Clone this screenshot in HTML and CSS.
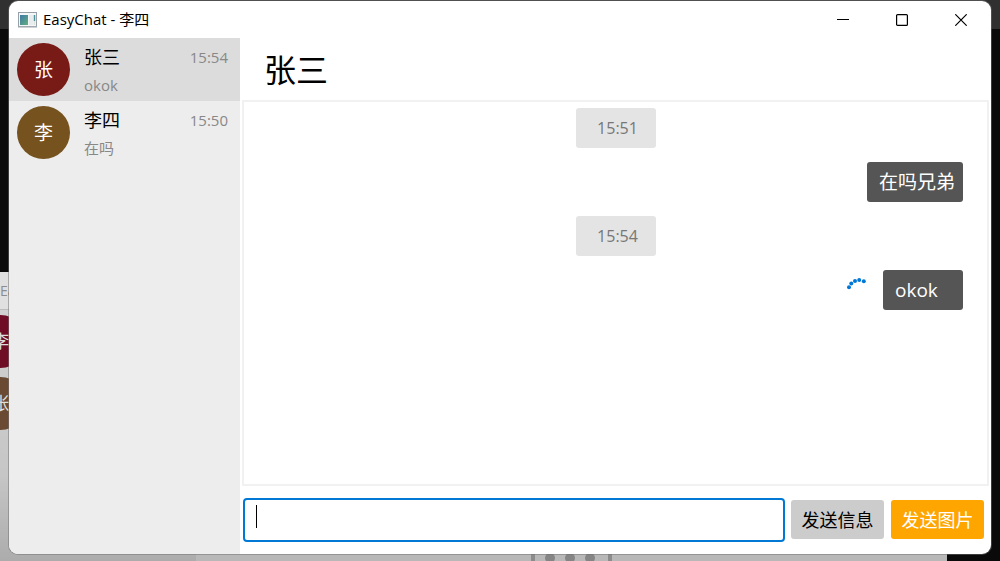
FILE: index.html
```html
<!DOCTYPE html>
<html lang="zh-CN">
<head>
<meta charset="utf-8">
<meta name="viewport" content="width=device-width, initial-scale=1">
<title>EasyChat - 李四</title>
<link rel="stylesheet" href="styles.css">
</head>
<body>
<div class="desktop" aria-hidden="true">
  <div class="desktop-top"></div>
  <div class="back-window">
    <div class="back-title">EasyChat</div>
    <div class="back-avatar back-avatar-red">李</div>
    <div class="back-avatar back-avatar-brown">张</div>
  </div>
  <div class="back-panel"></div>
  <svg class="back-dots" width="81" height="8" viewBox="0 0 81 8">
    <path d="M0 0H4V8H0ZM77 0H81V8H77Z" fill="#8c8c8c"/>
    <g fill="#858585"><circle cx="19" cy="5" r="5"/><circle cx="39" cy="5" r="5"/><circle cx="59" cy="5" r="5"/></g>
  </svg>
</div>
<div class="window">
  <header class="titlebar">
    <svg class="app-icon" width="19" height="16" viewBox="0 0 19 16">
      <defs>
        <linearGradient id="screen" x1="0" y1="0" x2="1" y2="1"><stop offset="0" stop-color="#3f78a8"/><stop offset="1" stop-color="#62b07c"/></linearGradient>
      </defs>
      <rect x=".5" y=".5" width="18" height="14" fill="#f4f6f7" stroke="#98a1a8"/>
      <path d="M0 15.200H19" stroke="#b9bec2"/>
      <rect x="2" y="3" width="8" height="10" fill="url(#screen)"/>
      <rect x="11" y="3" width="4" height="10" fill="#e9ecee"/>
      <path d="M16.500 3V9" stroke="#4d9296" stroke-width="1.500"/>
      <path d="M16.500 9V13" stroke="#d9e4de" stroke-width="1.500"/>
    </svg>
    <span class="app-name">EasyChat - 李四</span>
    <div class="window-controls">
      <button class="window-button" type="button" aria-label="最小化"><svg width="12" height="12" viewBox="0 0 12 12"><path d="M0 5.500H12"/></svg></button>
      <button class="window-button" type="button" aria-label="最大化"><svg width="12" height="12" viewBox="0 0 12 12"><rect x=".6" y=".6" width="10.800" height="10.800" rx="1"/></svg></button>
      <button class="window-button" type="button" aria-label="关闭"><svg width="12" height="12" viewBox="0 0 12 12"><path d="M.3.3 11.700 11.700M11.700.3.3 11.700"/></svg></button>
    </div>
  </header>
  <div class="body">
    <nav class="contacts">
      <button class="contact contact-active" type="button">
        <span class="avatar avatar-red">张</span>
        <span class="contact-text"><span class="contact-name">张三</span><span class="contact-last">okok</span></span>
        <time class="contact-time">15:54</time>
      </button>
      <button class="contact" type="button">
        <span class="avatar avatar-brown">李</span>
        <span class="contact-text"><span class="contact-name">李四</span><span class="contact-last">在吗</span></span>
        <time class="contact-time">15:50</time>
      </button>
    </nav>
    <main class="chat">
      <h1 class="chat-title">张三</h1>
      <section class="messages">
        <time class="stamp">15:51</time>
        <div class="message"><p class="bubble">在吗兄弟</p></div>
        <time class="stamp">15:54</time>
        <div class="message">
          <svg class="spinner" width="20" height="20" viewBox="0 0 20 20" role="img" aria-label="发送中">
            <g fill="#0078d7"><circle cx="2" cy="11.200" r="2"/><circle cx="4.300" cy="7.500" r="2"/><circle cx="8" cy="4.900" r="2"/><circle cx="12.200" cy="4" r="2"/><circle cx="16.800" cy="5.200" r="2"/></g>
          </svg>
          <p class="bubble">okok</p>
        </div>
      </section>
      <form class="composer">
        <div class="field">
          <input class="field-input" type="text" aria-label="信息">
          <span class="caret"></span>
        </div>
        <div class="actions">
          <button class="send send-text" type="button">发送信息</button>
          <button class="send send-image" type="button">发送图片</button>
        </div>
      </form>
    </main>
  </div>
</div>
</body>
</html>
```
FILE: styles.css
```css
* {
  box-sizing: border-box;
}

body {
  margin: 0;
  height: 100vh;
  padding: 1px 9px 7px;
  overflow: hidden;
  background: #0a0a0a;
  color: #000;
  font-family: "Open Sans", "Noto Sans CJK SC", sans-serif;
}

button,
input {
  font: inherit;
  border: 0;
  margin: 0;
}

/* Desktop behind the window */
.desktop {
  position: absolute;
  inset: 0;
  overflow: hidden;
}

.desktop-top {
  height: 29px;
  background: #303030;
}

.back-window {
  position: absolute;
  top: 272px;
  left: 0;
  bottom: 0;
  width: 196px;
  background: linear-gradient(#d4d4d4, #c6c6c6 70%, #acacac);
}

.back-title {
  height: 38px;
  border-bottom: 1px solid #bcbcbc;
  background: #e0e0e0;
  color: #8c8c8c;
  font-size: 14px;
  line-height: 37px;
}

.back-avatar {
  width: 53px;
  height: 53px;
  margin: 5px 0 9px -26px;
  border-radius: 50%;
  color: #ddd;
  font-size: 18px;
  line-height: 53px;
  text-align: center;
}

.back-avatar-red {
  background: #6e0d25;
}

.back-avatar-brown {
  background: #6b4a34;
}

.back-panel {
  position: absolute;
  left: 196px;
  right: 53px;
  bottom: 0;
  height: 8px;
  background: #b8b8b8;
}

.back-dots {
  position: absolute;
  left: 531px;
  bottom: 0;
}

/* Window */
.window {
  position: relative;
  display: flex;
  flex-direction: column;
  height: 100%;
  overflow: hidden;
  border-radius: 9px;
  background: #fff;
  box-shadow: 0 0 0 1px #70707080;
}

.titlebar {
  display: flex;
  align-items: center;
  height: 37px;
  padding: 0 1px 0 9px;
}

.app-name {
  margin-left: 6px;
  padding-bottom: 1px;
  font-size: 15px;
  line-height: 20px;
}

.window-controls {
  display: flex;
  height: 36px;
  margin-left: auto;
}

.window-button {
  display: flex;
  align-items: center;
  justify-content: center;
  width: 59px;
  padding: 0;
  background: transparent;
}

.window-button svg {
  fill: none;
  stroke: #000;
  stroke-width: 1.200;
}

.body {
  display: flex;
  flex: 1;
  min-height: 0;
}

/* Contacts */
.contacts {
  width: 231px;
  background: #ededed;
}

.contact {
  display: flex;
  align-items: flex-start;
  width: 100%;
  height: 63px;
  padding: 5px 12px 5px 8px;
  background: transparent;
  text-align: left;
}

.contact-active {
  background: #dcdcdc;
}

.avatar {
  width: 53px;
  height: 53px;
  border-radius: 50%;
  color: #fff;
  font-size: 19px;
  line-height: 55px;
  text-align: center;
}

.avatar-red {
  background: #781a16;
}

.avatar-brown {
  background: #76521f;
}

.contact-text {
  display: flex;
  flex: 1;
  flex-direction: column;
  gap: 4px;
  margin-left: 14px;
}

.contact-name {
  font-size: 18px;
  line-height: 28px;
}

.contact-last,
.contact-time {
  color: #888;
  font-size: 15px;
}

.contact-last {
  line-height: 20px;
}

.contact-time {
  line-height: 28px;
}

/* Conversation */
.chat {
  display: flex;
  flex: 1;
  flex-direction: column;
  min-width: 0;
}

.chat-title {
  margin: 0;
  height: 62px;
  padding-left: 24px;
  font-size: 32px;
  font-weight: 400;
  line-height: 64px;
}

.messages {
  display: flex;
  flex: 1;
  flex-direction: column;
  gap: 14px;
  min-height: 0;
  margin: 0 2px;
  padding: 6px 24px;
  border: 2px solid #f1f1f1;
}

.stamp {
  align-self: center;
  width: 80px;
  padding-left: 4px;
  border-radius: 3px;
  background: #e4e4e4;
  color: #777;
  font-size: 16px;
  line-height: 40px;
  text-align: center;
}

.message {
  display: flex;
  align-items: center;
  justify-content: flex-end;
  gap: 16px;
}

.spinner {
  margin-bottom: 8px;
}

.bubble {
  min-width: 80px;
  margin: 0;
  padding: 0 8px 0 12px;
  border-radius: 3px;
  background: #555;
  color: #fff;
  font-size: 19px;
  line-height: 40px;
}

/* Composer */
.composer {
  display: flex;
  align-items: flex-start;
  gap: 6px;
  margin: 12px 7px 12px 3px;
}

.field {
  position: relative;
  flex: 1;
  height: 44px;
}

.field-input {
  width: 100%;
  height: 100%;
  padding: 0 11px;
  border: 2px solid #0078d4;
  border-radius: 4px;
  outline: 0;
  background: #fff;
  font-size: 18px;
}

.caret {
  position: absolute;
  top: 7px;
  left: 13px;
  width: 1px;
  height: 23px;
  background: #000;
}

.actions {
  display: flex;
  gap: 7px;
  padding-top: 2px;
}

.send {
  width: 93px;
  height: 39px;
  padding: 0 0 2px;
  border-radius: 3px;
  font-size: 18px;
}

.send-text {
  background: #ccc;
  color: #000;
}

.send-image {
  background: #ffa500;
  color: #fff;
}
```
